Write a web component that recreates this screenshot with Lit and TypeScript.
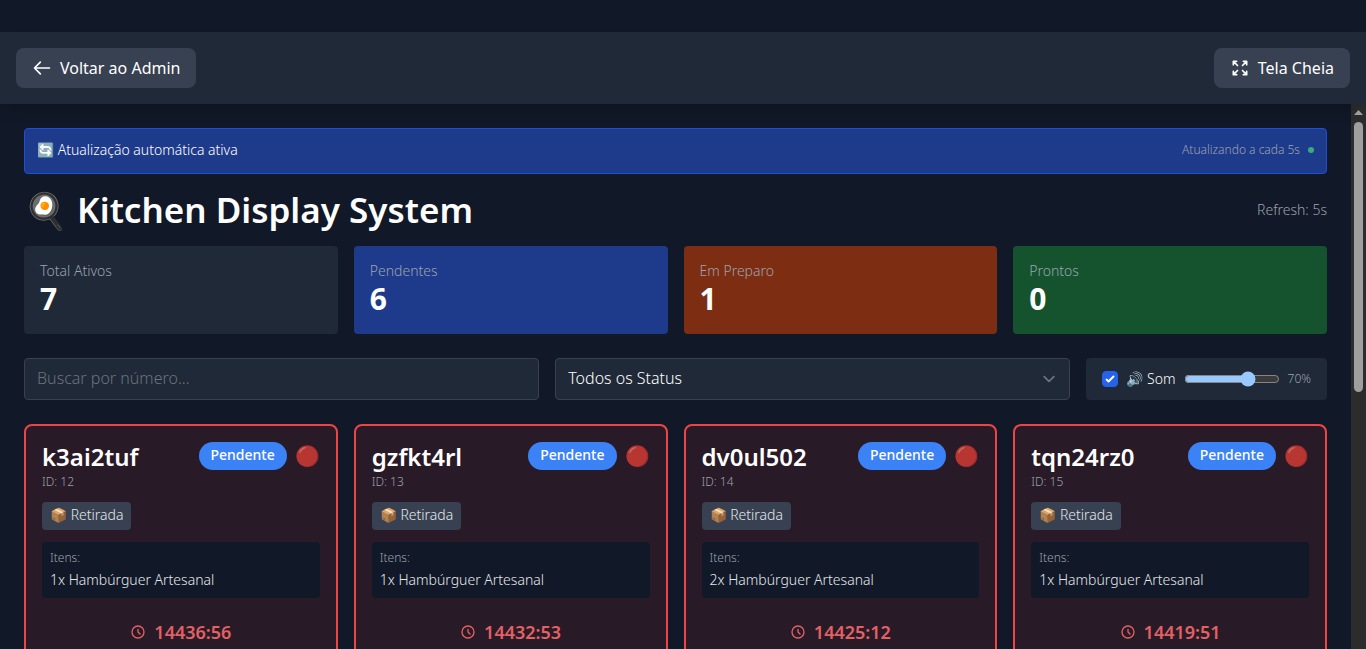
import { LitElement, html, css } from "lit";
import { customElement, property, state } from "lit/decorators.js";

interface Order { code: string; id: number; qty: number; timer: string; }

const ORDERS: Order[] = [
  { code: "k3ai2tuf", id: 12, qty: 1, timer: "14436:56" },
  { code: "gzfkt4rl", id: 13, qty: 1, timer: "14432:53" },
  { code: "dv0ul502", id: 14, qty: 2, timer: "14425:12" },
  { code: "tqn24rz0", id: 15, qty: 1, timer: "14419:51" },
];

const STATS = [
  { label: "Total Ativos", value: 7, tone: "gray" },
  { label: "Pendentes", value: 6, tone: "blue" },
  { label: "Em Preparo", value: 1, tone: "orange" },
  { label: "Prontos", value: 0, tone: "green" },
];

@customElement("order-card")
export class OrderCard extends LitElement {
  @property({ attribute: false }) order!: Order;

  static styles = css`
    :host { display: block; box-sizing: border-box; min-width: 0; height: 333px; padding: 16px;
      border: 2px solid #ef4444; border-radius: 8px; background: #281a26; color: #fff; }
    .head { display: flex; justify-content: space-between; align-items: flex-start; margin-bottom: 12px; }
    .code { margin: 0; font-size: 24px; line-height: 30px; font-weight: 600; }
    .id { margin-top: 2px; font-size: 12px; line-height: 16px; font-weight: 300; color: #9ca3af; }
    .state { display: flex; align-items: center; gap: 8px; }
    .badge { padding: 3px 12px 5px; border-radius: 14px; background: #3b82f6; font-size: 14px; line-height: 20px; font-weight: 500; }
    .alert { font-size: 20px; line-height: 28px; opacity: .7; }
    .kind { display: inline-block; padding: 3px 8px 5px; border-radius: 4px; background: #374151; color: #e5e7eb; font-size: 14px; line-height: 20px; font-weight: 300; }
    .items { margin-top: 12px; padding: 8px; border-radius: 4px; background: #111827; }
    .items-label { margin-bottom: 4px; font-size: 12px; line-height: 16px; font-weight: 300; color: #9ca3af; }
    .item { font-size: 14px; line-height: 20px; font-weight: 300; color: #e5e7eb; }
    .timer { display: flex; justify-content: center; align-items: center; gap: 8px; margin-top: 20px;
      font-size: 18px; line-height: 28px; font-weight: 600; color: #e26164; }
  `;

  render() {
    const o = this.order;
    return html`
      <div class="head">
        <div>
          <h2 class="code">${o.code}</h2>
          <div class="id">ID: ${o.id}</div>
        </div>
        <div class="state"><span class="badge">Pendente</span><span class="alert">🔴</span></div>
      </div>
      <span class="kind">📦 Retirada</span>
      <div class="items">
        <div class="items-label">Itens:</div>
        <div class="item">${o.qty}x Hambúrguer Artesanal</div>
      </div>
      <div class="timer">
        <svg width="16" height="16" viewBox="0 0 24 24" fill="none" stroke="currentColor" stroke-width="2" stroke-linecap="round" stroke-linejoin="round" aria-hidden="true"><path d="M12 8v4l3 3m6-3a9 9 0 11-18 0 9 9 0 0118 0z"/></svg>
        <span>${o.timer}</span>
      </div>`;
  }
}

@customElement("app-root")
export class AppRoot extends LitElement {
  @state() private volume = 70;

  static styles = css`
    :host { display: flex; flex-direction: column; box-sizing: border-box; height: 100vh; padding-top: 32px; overflow: hidden;
      background: #111827; color: #fff; font-family: "Noto Sans", sans-serif; font-size: 16px; line-height: 24px; }
    * { box-sizing: border-box; }
    button, input, select { font: inherit; color: inherit; }
    .topbar { position: relative; flex: none; display: flex; justify-content: space-between; padding: 16px; background: #1f2937;
      box-shadow: 0 10px 15px -3px rgba(0,0,0,.1), 0 4px 6px -4px rgba(0,0,0,.1); }
    .nav { display: flex; align-items: center; gap: 8px; padding: 8px 16px; border: 0; border-radius: 8px; background: #374151; font-weight: 400; text-decoration: none; color: #fff; }
    .body { flex: 1; min-height: 0; display: flex; }
    .main { flex: 1; min-width: 0; padding: 24px; overflow: hidden; }
    .banner { display: flex; justify-content: space-between; align-items: center; padding: 11px 12px 13px; border: 1px solid #1d4ed8; border-radius: 4px; background: #1e3a8a; font-size: 14px; line-height: 20px; font-weight: 300; color: #fff; }
    .every { display: flex; align-items: center; gap: 8px; font-size: 12px; line-height: 16px; color: #9ca3af; }
    .dot { width: 6px; height: 6px; border-radius: 50%; background: #3aa981; }
    .title-row { display: flex; justify-content: space-between; align-items: center; margin: 16px 0; }
    .title { margin: 0; font-size: 35px; line-height: 40px; font-weight: 600; }
    .refresh { font-size: 14px; line-height: 20px; font-weight: 300; color: #9ca3af; }
    .grid { display: grid; grid-template-columns: repeat(4, minmax(0, 1fr)); gap: 16px; }
    .stat { padding: 15px 16px 17px; border-radius: 4px; }
    .stat-label { font-size: 14px; line-height: 20px; font-weight: 300; color: #9ca3af; }
    .stat-value { font-size: 30px; line-height: 36px; font-weight: 700; }
    .gray { background: #1f2937; }
    .blue { background: #1e3a8a; }
    .orange { background: #7c2d12; }
    .green { background: #14532d; }
    .filters { display: grid; grid-template-columns: minmax(0, 1fr) minmax(0, 1fr) auto; gap: 16px; margin: 24px 0; }
    .field { width: 100%; height: 42px; padding: 7px 12px 9px; border: 1px solid #374151; border-radius: 4px; background: #1f2937; font-weight: 300; }
    .field::placeholder { color: #6b7280; opacity: 1; }
    .select { position: relative; }
    .select .field { appearance: none; padding-right: 40px; }
    .chevron { position: absolute; right: 9px; top: 9px; pointer-events: none; }
    .sound { display: flex; align-items: center; gap: 8px; padding: 0 16px; border-radius: 4px; background: #1f2937; }
    .toggle { display: flex; align-items: center; gap: 8px; font-size: 14px; line-height: 20px; font-weight: 300; }
    .check { appearance: none; width: 16px; height: 16px; margin: 0; border: 1px solid #6b7280; border-radius: 4px; }
    .check:checked { border-color: #2563eb; background: #2563eb url("data:image/svg+xml,%3Csvg viewBox='0 0 16 16' fill='white' xmlns='http://www.w3.org/2000/svg'%3E%3Cpath d='M12.2 4.8a1 1 0 010 1.4l-5 5a1 1 0 01-1.4 0l-2-2a1 1 0 011.4-1.4L6.5 9.1l4.3-4.3a1 1 0 011.4 0z'/%3E%3C/svg%3E") center / 16px no-repeat; }
    .range { width: 96px; margin: 0; accent-color: #99c8ff; color-scheme: dark; }
    .percent { font-size: 12px; line-height: 16px; font-weight: 300; color: #9ca3af; }
    .scroll { flex: none; width: 15px; display: flex; flex-direction: column; align-items: center; background: #2c2c2c; }
    .up { width: 9px; height: 5px; margin: 6px 0 7px; background: #9f9f9f; clip-path: polygon(50% 0, 100% 100%, 0 100%); }
    .thumb { width: 9px; height: 49.5%; border-radius: 5px; background: #9f9f9f; }
  `;

  private onVolume(e: Event) {
    this.volume = Number((e.target as HTMLInputElement).value);
  }

  render() {
    return html`
      <header class="topbar">
        <a class="nav" href="#admin">
          <svg width="20" height="20" viewBox="0 0 24 24" fill="none" stroke="currentColor" stroke-width="2" stroke-linecap="round" stroke-linejoin="round" aria-hidden="true"><path d="M10 19l-7-7m0 0l7-7m-7 7h18"/></svg>
          Voltar ao Admin
        </a>
        <button class="nav" type="button">
          <svg width="20" height="20" viewBox="0 0 24 24" fill="none" stroke="currentColor" stroke-width="2" stroke-linecap="round" stroke-linejoin="round" aria-hidden="true"><path d="M4 8V4m0 0h4M4 4l5 5m11-1V4m0 0h-4m4 0l-5 5M4 16v4m0 0h4m-4 0l5-5m11 5l-5-5m5 5v-4m0 4h-4"/></svg>
          Tela Cheia
        </button>
      </header>
      <div class="body">
        <main class="main">
          <div class="banner">
            <span>🔄 Atualização automática ativa</span>
            <span class="every">Atualizando a cada 5s <span class="dot"></span></span>
          </div>
          <div class="title-row">
            <h1 class="title">🍳 Kitchen Display System</h1>
            <span class="refresh">Refresh: 5s</span>
          </div>
          <section class="grid">
            ${STATS.map((s) => html`
              <div class="stat ${s.tone}">
                <div class="stat-label">${s.label}</div>
                <div class="stat-value">${s.value}</div>
              </div>`)}
          </section>
          <div class="filters">
            <input class="field" type="text" placeholder="Buscar por número..." aria-label="Buscar por número" />
            <div class="select">
              <select class="field" aria-label="Status"><option>Todos os Status</option></select>
              <svg class="chevron" width="24" height="24" viewBox="0 0 20 20" fill="none" stroke="#6b7280" stroke-width="1.5" stroke-linecap="round" stroke-linejoin="round" aria-hidden="true"><path d="M6 8l4 4 4-4"/></svg>
            </div>
            <div class="sound">
              <label class="toggle"><input class="check" type="checkbox" checked /><span>🔊 Som</span></label>
              <input class="range" type="range" min="0" max="100" .value=${String(this.volume)} @input=${this.onVolume} aria-label="Volume" />
              <span class="percent">${this.volume}%</span>
            </div>
          </div>
          <section class="grid">
            ${ORDERS.map((o) => html`<order-card .order=${o}></order-card>`)}
          </section>
        </main>
        <div class="scroll" aria-hidden="true"><div class="up"></div><div class="thumb"></div></div>
      </div>`;
  }
}
